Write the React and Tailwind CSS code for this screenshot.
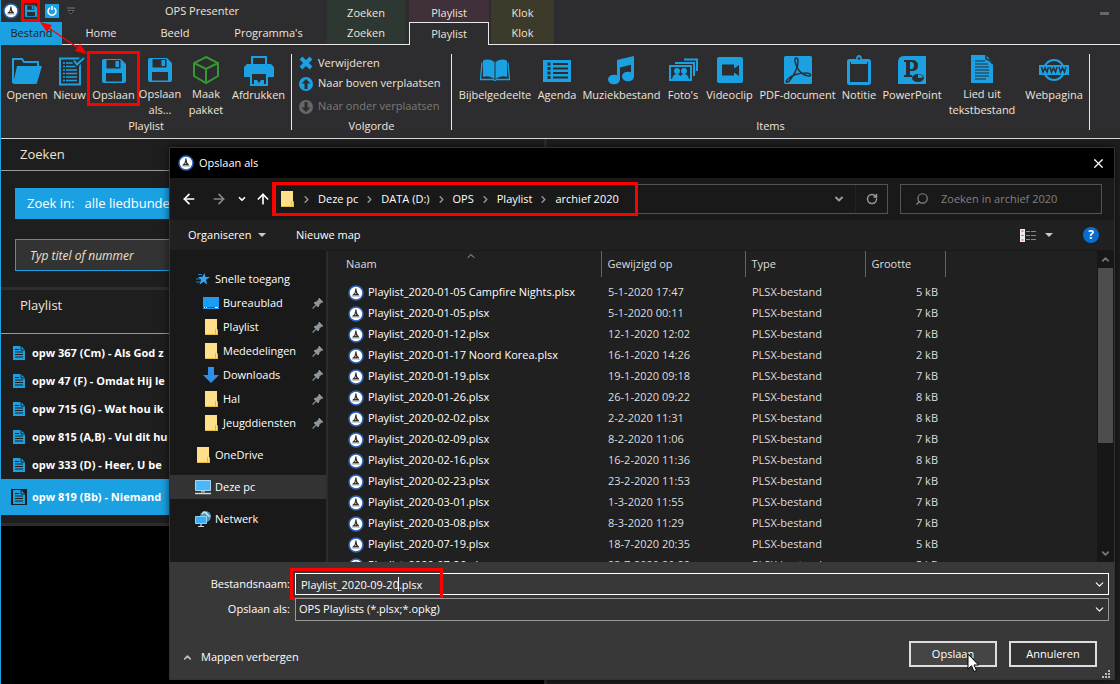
import {
  ArrowLeft,
  ArrowRight,
  ArrowUp,
  ChevronDown,
  ChevronRight,
  ChevronUp,
  RotateCw,
  Search,
  X,
} from "lucide-react";

const BLUE = "#1ba1e2";

/* ---------- icons ---------- */

const Logo = () => (
  <svg className="h-4 w-4 shrink-0" viewBox="0 0 16 16">
    <circle cx="8" cy="8" r="7" fill="#fff" stroke="#2a62b8" strokeWidth="1.5" />
    <path d="M7.500 3.200h.8l1 4.600 1.700 1.700v1H4.500v-.8l2-1.700z" fill="#333" />
    <path d="M7.800 7.500l.4 1.500H7z" fill="#fff" />
    <path d="M4 11.200h8" stroke="#aaa" strokeWidth="0.8" />
  </svg>
);

const SaveIcon = ({ className = "h-7 w-7" }) => (
  <svg className={className} viewBox="0 0 28 28">
    <path
      fillRule="evenodd"
      fill={BLUE}
      d="M4 2h17l5 5v17q0 2-2 2H4q-2 0-2-2V4q0-2 2-2zM6.500 3v8.500h14V3zM6 16v8.500h16V16z"
    />
    <path d="M15.500 4h3.500v6h-3.500z" fill={BLUE} />
  </svg>
);

const OpenIcon = () => (
  <svg className="h-8 w-8" viewBox="0 0 32 32">
    <path d="M2 28V4h9l2 3h14v4" fill="none" stroke={BLUE} strokeWidth="2" />
    <path d="M6 11h25l-5 17q0 1-2 1H2z" fill={BLUE} />
  </svg>
);

const NewIcon = () => (
  <svg className="h-8 w-8" viewBox="0 0 32 32">
    <path d="M6 3.500h20v26H6z" fill="none" stroke={BLUE} strokeWidth="2" />
    <path d="M9 8h2m1 0h8M9 11.500h2m1 0h11M9 15h2m1 0h11M9 18.500h2m1 0h11M9 22h2m1 0h11M9 25.500h2m1 0h11" stroke={BLUE} strokeWidth="1.300" />
    <path d="M20 6l3 3.500L30 2" fill="none" stroke="#2d2d30" strokeWidth="5" />
    <path d="M20 5.500l3 4L30 3" fill="none" stroke={BLUE} strokeWidth="2" />
  </svg>
);

const BoxIcon = () => (
  <svg className="h-8 w-8" viewBox="0 0 32 32">
    <path d="M16 3l12 6v13l-12 7-12-7V9zM4 9l12 6 12-6M16 15v14" fill="none" stroke="#339933" strokeWidth="2" />
  </svg>
);

const PrintIcon = () => (
  <svg className="h-8 w-8" viewBox="0 0 32 32">
    <path d="M9 11V2h14v9" fill="none" stroke={BLUE} strokeWidth="2" />
    <path d="M4 9h24l3 3v10h-6v-3H7v3H1V12z" fill={BLUE} />
    <path d="M8 19v11h16V19" fill="none" stroke={BLUE} strokeWidth="2" />
    <path d="M11 25h3l2 3 2-3h3v4H11z" fill={BLUE} />
  </svg>
);

const BookIcon = () => (
  <svg className="h-8 w-8" viewBox="0 0 32 32">
    <path d="M15.500 7Q10 3 4 5.500V22q6-2 11.500 2zM16.500 7q5.500-4 11.500-1.500V22q-6-2-11.500 2z" fill={BLUE} />
    <path d="M3 7.500L1.500 24.500H14l2 1 2-1h12.500L29 7.500" fill="none" stroke={BLUE} strokeWidth="1.300" />
  </svg>
);

const AgendaIcon = () => (
  <svg className="h-8 w-8" viewBox="0 0 32 32">
    <path d="M2 5h28v22H2z" fill={BLUE} />
    <path d="M12 9h15M12 13.500h15M12 18h15M12 22.500h15" stroke="#2d2d30" strokeWidth="1.800" />
    <path d="M6.500 9h3M6.500 13.500h3M6.500 18h3M6.500 22.500h3" stroke="#2d2d30" strokeWidth="3" />
  </svg>
);

const MusicIcon = () => (
  <svg className="h-8 w-8" viewBox="0 0 32 32">
    <path d="M11 5l17-4v8l-14 3.500V24h-3z" fill={BLUE} />
    <path d="M25 4h3v18h-3z" fill={BLUE} />
    <ellipse cx="8" cy="24.500" rx="6" ry="4.800" fill={BLUE} />
    <ellipse cx="22" cy="21.500" rx="6" ry="4.800" fill={BLUE} />
  </svg>
);

const PhotosIcon = () => (
  <svg className="h-8 w-8" viewBox="0 0 32 32">
    <path d="M3 11h21v14H3zM8 8h19v13M17 4.500h13V16" fill="none" stroke={BLUE} strokeWidth="2" />
    <circle cx="10" cy="16" r="3" fill={BLUE} />
    <circle cx="17" cy="16" r="3" fill={BLUE} />
    <path d="M5 24q1-5 5-5 2 0 3.500 2Q15 19 17 19q4 0 5 5z" fill={BLUE} />
  </svg>
);

const VideoIcon = () => (
  <svg className="h-8 w-8" viewBox="0 0 32 32">
    <rect x="3" y="2" width="26" height="26" rx="2" fill={BLUE} />
    <path d="M8 9.500h12v4l5-3.500v11l-5-3.500v3H8z" fill="#2d2d30" />
  </svg>
);

const PdfIcon = () => (
  <svg className="h-8 w-8" viewBox="0 0 32 32">
    <rect x="2" y="1" width="28" height="28" rx="1.500" fill={BLUE} />
    <path
      d="M14 3c-2 0-1 5 1 9 2 5 7 9 12 9 3 0 2-3-3-3-7 0-14 2-18 6-4 3-1 5 2 1 4-5 8-13 8-19 0-2-1-3-2-3z"
      fill="none"
      stroke="#2d2d30"
      strokeWidth="1.500"
    />
  </svg>
);

const NoteIcon = () => (
  <svg className="h-8 w-8" viewBox="0 0 32 32">
    <rect x="5.500" y="5.500" width="21" height="23" rx="1" fill="none" stroke={BLUE} strokeWidth="3" />
    <path d="M8 5h5q0-5 3-5t3 5h5v4H8z" fill={BLUE} />
    <path d="M7.500 7v2.500h17V7" fill="none" stroke="#2d2d30" strokeWidth="1" />
    <circle cx="16" cy="3.500" r="1.200" fill="#2d2d30" />
  </svg>
);

const PowerPointIcon = () => (
  <svg className="h-8 w-8" viewBox="0 0 32 32">
    <path d="M2 7q0-6 6-6h22v28H2z" fill={BLUE} />
    <path
      fillRule="evenodd"
      d="M8 5h8q6 0 6 5.500T16 16h-2v4h2v2H8v-2h2V7H8zM14 7v7h1q3 0 3-3.500T15 7z"
      fill="#2d2d30"
    />
    <ellipse cx="22" cy="23" rx="6" ry="4" fill="#2d2d30" />
    <path d="M22 23v-3.500q4 0 5 3z" fill={BLUE} />
  </svg>
);

const DocIcon = () => (
  <svg className="h-8 w-8" viewBox="0 0 32 32">
    <path d="M5 1h15l7 8v20H5z" fill={BLUE} />
    <path d="M9 7h10M9 10h13M9 13h14M9 16h14M9 19h14M9 22h14M9 25h11" stroke="#2d2d30" strokeWidth="1.200" />
    <path d="M20 1v4l3 1 4 4" fill="none" stroke="#2d2d30" strokeWidth="1.500" />
  </svg>
);

const WebIcon = () => (
  <svg className="h-8 w-8" viewBox="0 0 32 32">
    <circle cx="16" cy="15" r="10" fill="none" stroke={BLUE} strokeWidth="2" />
    <path d="M1 10h30v10H1z" fill={BLUE} />
    <path
      d="M3.500 12l1.500 5 2-4 2 4 1.500-5M12 12l1.500 5 2-4 2 4 1.500-5M21 12l1.500 5 2-4 2 4 1.500-5"
      fill="none"
      stroke="#2d2d30"
      strokeWidth="1.500"
    />
  </svg>
);

const SongIcon = () => (
  <svg className="h-4 w-4 shrink-0" viewBox="0 0 16 16">
    <path d="M2 1h8l4 4v10H2z" fill={BLUE} />
    <path d="M4 4.500h4M4 7h8M4 9.500h8M4 12h8M10 1v4h4" fill="none" stroke="#1e1e1e" strokeWidth="1" />
  </svg>
);

const FolderIcon = () => (
  <svg className="h-4 w-4 shrink-0" viewBox="0 0 16 16">
    <path d="M2 0h12v10l1 1v5H2z" fill="#ffe08a" />
    <path d="M12.500 10v6M2 15.500h12M14.500 11v5" stroke="#e8bb3f" strokeWidth="1" />
  </svg>
);

const StarIcon = () => (
  <svg className="h-4 w-4 shrink-0" viewBox="0 0 16 16">
    <path d="M9.500 2l1 4 4.500.2-4 2.600 1.200 4.700-3.700-2.700-4 3 1.500-5L3 6l4.500-.2z" fill="#35a5f5" />
    <path d="M3 3.500h4M1 8h4M1 11h4" stroke="#1f7fd0" strokeWidth="1" />
  </svg>
);

const DesktopIcon = () => (
  <svg className="h-4 w-4 shrink-0" viewBox="0 0 16 16">
    <path d="M0 2h16v12H0z" fill="#1e9bf5" />
    <path d="M0 12.500h16" stroke="#0a62b0" />
    <path d="M1 12.500h1m1 0h1m8 0h3" stroke="#fff" />
  </svg>
);

const DownloadIcon = () => (
  <svg className="h-4 w-4 shrink-0" viewBox="0 0 16 16">
    <path d="M5 0h6v8h5l-8 8-8-8h5z" fill="#2f8fe8" />
  </svg>
);

const PcIcon = () => (
  <svg className="h-4 w-4 shrink-0" viewBox="0 0 16 16">
    <path d="M.5 1.500h15v10H.5z" fill="#4ab8f8" stroke="#a9d8f5" strokeWidth="1" />
    <path d="M6 12h4v1.500H6z" fill="#8ca0ad" />
    <path d="M0 14.500h16" stroke="#cfd8de" strokeWidth="1.500" />
  </svg>
);

const NetworkIcon = () => (
  <svg className="h-4 w-4 shrink-0" viewBox="0 0 16 16">
    <circle cx="10.500" cy="5.500" r="5.500" fill="#5b93b5" />
    <path d="M7 3q3-3 5 0t3 2M8 1l4 1" fill="none" stroke="#cbe6f2" strokeWidth="1.500" />
    <path d="M.5 5.500h11v7H.5z" fill="#3aaef5" stroke="#8fd0f8" strokeWidth="1" />
    <path d="M3 15.500h6M6 13v2" stroke="#cfd8de" strokeWidth="1.200" />
  </svg>
);

const PinIcon = () => (
  <svg className="h-3 w-3 shrink-0" viewBox="0 0 12 12">
    <path d="M7 1l4 4-1 .5-.5-.2L7 7.500 7 9 6 10 4.200 8.200 1 11.500.5 11 3.800 7.800 2 6l1-1h1.500L6.800 2.500z" fill="#8d979e" stroke="#8d979e" strokeWidth="0.700" />
  </svg>
);

const Caret = () => (
  <svg className="h-1 w-2" viewBox="0 0 8 4">
    <path d="M0 0h8L4 4z" fill="#c8c8c8" />
  </svg>
);

/* ---------- data ---------- */

const playlistButtons = [
  { label: "Openen", Icon: OpenIcon, width: "w-[44px]" },
  { label: "Nieuw", Icon: NewIcon, width: "w-[41px]" },
  { label: "Opslaan", Icon: SaveIcon, width: "w-[47px]", marked: true },
  { label: "Opslaan als...", Icon: SaveIcon, width: "w-[46px]" },
  { label: "Maak pakket", Icon: BoxIcon, width: "w-[46px]" },
  { label: "Afdrukken", Icon: PrintIcon, width: "w-[59px]" },
];

const itemButtons = [
  { label: "Bijbelgedeelte", Icon: BookIcon, width: "w-[80px]" },
  { label: "Agenda", Icon: AgendaIcon, width: "w-[44px]" },
  { label: "Muziekbestand", Icon: MusicIcon, width: "w-[85px]" },
  { label: "Foto's", Icon: PhotosIcon, width: "w-[38px]" },
  { label: "Videoclip", Icon: VideoIcon, width: "w-[55px]" },
  { label: "PDF-document", Icon: PdfIcon, width: "w-[81px]" },
  { label: "Notitie", Icon: NoteIcon, width: "w-[42px]" },
  { label: "PowerPoint", Icon: PowerPointIcon, width: "w-[64px]" },
  { label: "Lied uit tekstbestand", Icon: DocIcon, width: "w-[76px]" },
  { label: "Webpagina", Icon: WebIcon, width: "w-[68px]" },
];

const songs = [
  "opw 367 (Cm) - Als God z",
  "opw 47 (F) - Omdat Hij le",
  "opw 715 (G) - Wat hou ik",
  "opw 815 (A,B) - Vul dit hu",
  "opw 333 (D) - Heer, U be",
];

const quickAccess = [
  { label: "Bureaublad", Icon: DesktopIcon },
  { label: "Playlist", Icon: FolderIcon },
  { label: "Mededelingen", Icon: FolderIcon },
  { label: "Downloads", Icon: DownloadIcon },
  { label: "Hal", Icon: FolderIcon },
  { label: "Jeugddiensten", Icon: FolderIcon },
];

const files = [
  { name: "Playlist_2020-01-05 Campfire Nights.plsx", date: "5-1-2020 17:47", size: "5 kB" },
  { name: "Playlist_2020-01-05.plsx", date: "5-1-2020 00:11", size: "7 kB" },
  { name: "Playlist_2020-01-12.plsx", date: "12-1-2020 12:02", size: "7 kB" },
  { name: "Playlist_2020-01-17 Noord Korea.plsx", date: "16-1-2020 14:26", size: "2 kB" },
  { name: "Playlist_2020-01-19.plsx", date: "19-1-2020 09:18", size: "7 kB" },
  { name: "Playlist_2020-01-26.plsx", date: "26-1-2020 09:22", size: "8 kB" },
  { name: "Playlist_2020-02-02.plsx", date: "2-2-2020 11:31", size: "8 kB" },
  { name: "Playlist_2020-02-09.plsx", date: "8-2-2020 11:06", size: "7 kB" },
  { name: "Playlist_2020-02-16.plsx", date: "16-2-2020 11:36", size: "8 kB" },
  { name: "Playlist_2020-02-23.plsx", date: "23-2-2020 11:53", size: "7 kB" },
  { name: "Playlist_2020-03-01.plsx", date: "1-3-2020 11:55", size: "7 kB" },
  { name: "Playlist_2020-03-08.plsx", date: "8-3-2020 11:29", size: "7 kB" },
  { name: "Playlist_2020-07-19.plsx", date: "18-7-2020 20:35", size: "5 kB" },
  { name: "Playlist_2020-07-26.plsx", date: "23-7-2020 20:22", size: "5 kB" },
];

const crumbs = ["Deze pc", "DATA (D:)", "OPS", "Playlist", "archief 2020"];

/* ---------- application window ---------- */

const RibbonButton = ({ label, Icon, width, marked }) => (
  <button className={`relative flex shrink-0 flex-col items-center ${width}`}>
    <span className="flex h-[33px] items-center">
      <Icon />
    </span>
    <span className="flex w-0 justify-center">
      <span className={`text-center leading-4 ${label.includes(" ") ? "w-20 px-1" : "whitespace-nowrap"}`}>
        {label.includes(" ") ? (
          <>
            {label.slice(0, label.lastIndexOf(" "))}
            <br />
            {label.slice(label.lastIndexOf(" ") + 1)}
          </>
        ) : (
          label
        )}
      </span>
    </span>
    {marked && <span className="absolute -inset-x-[3px] -top-[3px] h-[55px] border-3 border-[#ff0000]" />}
  </button>
);

const TitleBar = () => (
  <header className="flex">
    <div className="flex w-[326px] shrink-0 flex-col">
      <div className="flex h-[22px] items-center">
        <span className="flex w-[20px] justify-center">
          <Logo />
        </span>
        <button aria-label="Opslaan" className="flex h-[22px] w-[19px] items-center justify-center border-3 border-[#ff0000]">
          <SaveIcon className="h-[14px] w-[14px] shrink-0" />
        </button>
        <button aria-label="Vernieuwen" className="ml-[5px] flex h-[14px] w-[14px] items-center justify-center bg-[#1ba1e2]">
          <svg className="h-3 w-3" viewBox="0 0 12 12">
            <path d="M4 2.800a4 4 0 1 0 4 0M6 1v4" fill="none" stroke="#fff" strokeWidth="1.500" />
          </svg>
        </button>
        <svg className="ml-2 h-2 w-2" viewBox="0 0 8 8">
          <path d="M0 1h8" stroke="#777" strokeWidth="1" />
          <path d="M1 3.500h6L4 7z" fill="#111" stroke="#777" strokeWidth="0.800" />
        </svg>
        <h1 className="ml-[90px]">OPS Presenter</h1>
      </div>
      <nav className="flex h-[23px]">
        <button className="w-[61px] bg-[#1ba1e2] text-[#1e1e1e]">Bestand</button>
        <div className="flex grow border-b border-[#e8e8e8]">
          <button className="w-[78px]">Home</button>
          <button className="w-[70px]">Beeld</button>
          <button className="w-[117px]">Programma's</button>
        </div>
      </nav>
    </div>
    <div className="flex w-[82px] shrink-0 flex-col border-b border-[#e8e8e8] pr-1">
      <div className="flex h-[22px] items-center justify-center bg-[#2e3833] pt-1">Zoeken</div>
      <button className="h-[22px] bg-[#2e3833] pt-px">Zoeken</button>
    </div>
    <div className="flex w-[80px] shrink-0 flex-col">
      <div className="flex h-[22px] items-center justify-center bg-[#40303a] pt-1">Playlist</div>
      <button className="h-[23px] border border-b-0 border-[#e8e8e8]">Playlist</button>
    </div>
    <div className="flex grow justify-between border-b border-[#e8e8e8] pl-[2px]">
      <div className="flex w-[63px] flex-col bg-[#3c3a2b]">
        <div className="flex h-[22px] items-center justify-center pt-1">Klok</div>
        <button className="h-[22px] pt-px">Klok</button>
      </div>
      <button aria-label="Minimaliseren" className="mt-2 mr-[11px] h-[7px] w-[9px] border-b-3 border-[#6a6864]" />
    </div>
  </header>
);

const Ribbon = () => (
  <section className="flex h-[94px] border-b border-[#d8d8d8] pt-[9px]">
    <div className="flex h-[76px] w-[291px] shrink-0 flex-col border-r border-[#e8e8e8]">
      <div className="flex h-[64px] shrink-0 pl-1">
        {playlistButtons.map((button) => (
          <RibbonButton key={button.label} {...button} />
        ))}
      </div>
      <div className="text-center leading-4">Playlist</div>
    </div>
    <div className="flex h-[76px] w-[160px] shrink-0 flex-col border-r border-[#e8e8e8]">
      <div className="flex h-[64px] shrink-0 flex-col pl-[6px]">
        <button className="flex h-[18px] items-center gap-1">
          <svg className="h-4 w-4" viewBox="0 0 16 16">
            <path d="M3 3l10 10M13 3L3 13" stroke={BLUE} strokeWidth="4" />
          </svg>
          Verwijderen
        </button>
        <button className="flex h-[23px] items-center gap-1 whitespace-nowrap">
          <svg className="h-4 w-4" viewBox="0 0 16 16">
            <circle cx="8" cy="8" r="7" fill={BLUE} />
            <path d="M8 3l4.500 4.500h-3V13h-3V7.500h-3z" fill="#2d2d30" />
          </svg>
          Naar boven verplaatsen
        </button>
        <button className="flex h-[23px] items-center gap-1 whitespace-nowrap text-[#7c7a76]">
          <svg className="h-4 w-4" viewBox="0 0 16 16">
            <circle cx="8" cy="8" r="7" fill="#666" />
            <path d="M8 13l4.500-4.500h-3V3h-3v5.500h-3z" fill="#2d2d30" />
          </svg>
          Naar onder verplaatsen
        </button>
      </div>
      <div className="text-center leading-4">Volgorde</div>
    </div>
    <div className="flex h-[76px] w-[638px] shrink-0 flex-col border-r border-[#e8e8e8]">
      <div className="flex h-[64px] shrink-0 pl-[3px]">
        {itemButtons.map((button) => (
          <RibbonButton key={button.label} {...button} />
        ))}
      </div>
      <div className="text-center leading-4">Items</div>
    </div>
  </section>
);

const Workspace = () => (
  <main className="flex grow bg-[#1e1e1e]">
    <div className="flex w-[543px] shrink-0 flex-col">
      <h2 className="h-8 border-b border-[#999] pl-[19px] text-[13px] leading-[30px]">Zoeken</h2>
      <div className="flex flex-col gap-5 border-b-3 border-[#2d2d2d] px-[14px] pt-[17px] pb-4">
        <button className="h-[31px] bg-[#1ba1e2] pl-3 text-left text-[13px] text-white">
          Zoek in:<span className="ml-[10px]">alle liedbunde</span>
        </button>
        <input
          aria-label="Zoeken"
          placeholder="Typ titel of nummer"
          className="h-8 border border-[#1ba1e2] bg-[#333] pl-[14px] text-xs italic placeholder:text-[#f0e0d0]"
        />
      </div>
      <h2 className="h-[44px] border-b border-[#999] pl-[19px] text-[13px] leading-[30px]">Playlist</h2>
      <ul className="border-b-3 border-[#2d2d2d] pt-[5px] pb-2 font-bold text-white">
        {songs.map((song) => (
          <li key={song} className="flex h-7 items-center gap-[5px] pl-[10px]">
            <SongIcon />
            {song}
          </li>
        ))}
        <li className="flex h-9 items-center gap-[5px] bg-[#1ba1e2] pl-[10px]">
          <span className="bg-[#1e1e1e]">
            <SongIcon />
          </span>
          opw 819 (Bb) - Niemand
        </li>
      </ul>
      <div className="grow bg-black" />
    </div>
    <div className="w-[3px] bg-[#2d2d2d]" />
  </main>
);

/* ---------- save dialog ---------- */

const AddressBar = () => (
  <div className="flex h-[42px] shrink-0 items-center bg-[#191919] pr-3 pl-[11px] text-white">
    <button aria-label="Terug" className="w-4">
      <ArrowLeft size={16} strokeWidth={2.5} />
    </button>
    <button aria-label="Vooruit" className="ml-[14px] w-4 text-[#888]">
      <ArrowRight size={16} strokeWidth={2.5} />
    </button>
    <button aria-label="Recente locaties" className="ml-[10px] w-[10px]">
      <ChevronDown size={10} strokeWidth={4} />
    </button>
    <button aria-label="Omhoog" className="ml-2 w-4">
      <ArrowUp size={16} strokeWidth={2.5} />
    </button>
    <div className="relative ml-1 flex h-[30px] grow items-center border border-[#535353] pl-[3px]">
      <FolderIcon />
      <ol className="flex items-center">
        {crumbs.map((crumb) => (
          <li key={crumb} className="flex items-center whitespace-nowrap">
            <ChevronRight className="mx-[6px] text-[#999]" size={11} strokeWidth={3} />
            <a href="#">{crumb}</a>
          </li>
        ))}
      </ol>
      <button aria-label="Vorige locaties" className="mr-[10px] ml-auto text-[#999]">
        <ChevronDown size={12} strokeWidth={4} />
      </button>
      <button aria-label="Vernieuwen" className="flex h-full w-8 items-center justify-center border-l border-[#222] text-[#999]">
        <RotateCw size={12} strokeWidth={3} />
      </button>
      <span className="absolute -top-[3px] -left-[4px] h-[34px] w-[366px] border-3 border-[#ff0000]" />
    </div>
    <label className="ml-3 flex h-[30px] w-[202px] items-center border border-[#535353] pl-[14px]">
      <Search className="shrink-0 -scale-x-100 text-[#888]" size={14} strokeWidth={2} />
      <input
        aria-label="Zoeken in archief 2020"
        placeholder="Zoeken in archief 2020"
        className="ml-3 w-full min-w-0 placeholder:text-[#808080]"
      />
    </label>
  </div>
);

const Toolbar = () => (
  <div className="flex h-[31px] shrink-0 items-center border-b border-[#191919] bg-[#202020] pr-[15px] pl-[18px] text-white">
    <button className="flex w-[78px] items-center justify-between">
      Organiseren
      <Caret />
    </button>
    <button className="ml-[30px]">Nieuwe map</button>
    <button aria-label="Weergave" className="ml-auto flex items-center gap-[9px]">
      <svg className="h-[13px] w-4" viewBox="0 0 16 13">
        <path d="M0 0h5v13H0z" fill="#eee" />
        <path d="M1.500 2h2M1.500 11h2" stroke="#c33" />
        <path d="M1.500 6.500h2" stroke="#36c" />
        <path d="M6 2.500h4m1 0h5M6 6.500h4m1 0h5M6 10.500h4m1 0h5" stroke="#888" />
      </svg>
      <Caret />
    </button>
    <button aria-label="Help" className="ml-[30px] h-4 w-4 rounded-full bg-[#0a6cd0] text-xs leading-4 font-bold">
      ?
    </button>
  </div>
);

const FolderTree = () => (
  <nav className="w-[156px] shrink-0 bg-[#191919] pt-4 text-white">
    <div className="flex h-6 items-center gap-1 pl-[25px]">
      <StarIcon />
      Snelle toegang
    </div>
    {quickAccess.map(({ label, Icon }) => (
      <div key={label} className="flex h-6 items-center gap-1 pr-[2px] pl-[33px]">
        <Icon />
        <span className="grow whitespace-nowrap">{label}</span>
        <PinIcon />
      </div>
    ))}
    <div className="mt-2 flex h-6 items-center gap-1 pl-[25px]">
      <FolderIcon />
      OneDrive
    </div>
    <div className="my-2 flex h-6 items-center gap-1 bg-[#333] pl-[25px]">
      <PcIcon />
      Deze pc
    </div>
    <div className="flex h-6 items-center gap-1 pl-[25px]">
      <NetworkIcon />
      Netwerk
    </div>
  </nav>
);

const FileList = () => (
  <div className="relative min-w-0 grow overflow-hidden border-l-2 border-[#2b2b2b]">
    <ChevronUp className="absolute -top-px left-[137px] text-[#aaa]" size={12} strokeWidth={2} />
    <table className="w-full table-fixed text-left text-[#dedede]">
      <thead>
        <tr className="h-[26px]">
          <th className="w-[273px] border-r border-[#636363] pl-[18px] font-normal">Naam</th>
          <th className="w-[144px] border-r border-[#636363] pl-[6px] font-normal">Gewijzigd op</th>
          <th className="w-[120px] border-r border-[#636363] pl-[6px] font-normal">Type</th>
          <th className="w-[80px] border-r border-[#636363] pl-[6px] font-normal">Grootte</th>
          <th />
        </tr>
      </thead>
      <tbody className="before:block before:h-[5px]">
        {files.map((file) => (
          <tr key={file.name} className="h-[21px] whitespace-nowrap">
            <td className="pl-[20px] text-white">
              <span className="flex items-center gap-1">
                <Logo />
                {file.name}
              </span>
            </td>
            <td className="pl-[7px]">{file.date}</td>
            <td className="pl-[7px]">PLSX-bestand</td>
            <td className="pr-[7px] text-right">{file.size}</td>
            <td />
          </tr>
        ))}
      </tbody>
    </table>
  </div>
);

const Scrollbar = () => (
  <div className="flex w-[17px] shrink-0 flex-col items-center bg-[#171717] text-[#777]">
    <ChevronUp className="my-[3px] shrink-0" size={11} strokeWidth={4} />
    <div className="h-[175px] w-[15px] bg-[#4d4d4d]" />
    <ChevronDown className="mt-auto mb-[3px] shrink-0" size={11} strokeWidth={4} />
  </div>
);

const DialogFooter = () => (
  <footer className="h-[117px] shrink-0 bg-[#383838] pt-[11px] pr-[5px] text-white">
    <div className="flex h-[22px] items-center">
      <label htmlFor="filename" className="w-[120px] shrink-0 text-right">
        Bestandsnaam:
      </label>
      <div className="relative ml-[5px] flex grow items-center border border-white">
        <input id="filename" defaultValue="Playlist_2020-09-20.plsx" className="h-5 grow pl-[5px]" />
        <ChevronDown className="mr-[2px]" size={13} strokeWidth={2} />
        <span className="absolute top-[3px] left-[102px] h-[14px] w-px bg-white" />
        <span className="absolute -top-[6px] -left-[6px] h-[32px] w-[153px] border-3 border-[#ff0000]" />
      </div>
    </div>
    <div className="mt-[3px] flex h-[23px] items-center">
      <label htmlFor="filetype" className="w-[120px] shrink-0 text-right">
        Opslaan als:
      </label>
      <div className="relative ml-[5px] flex grow items-center">
        <select id="filetype" className="h-[23px] grow appearance-none border border-[#999] bg-[#333] pl-[3px]">
          <option>OPS Playlists (*.plsx;*.opkg)</option>
        </select>
        <ChevronDown className="pointer-events-none absolute right-[3px]" size={13} strokeWidth={2} />
      </div>
    </div>
    <div className="mt-5 flex h-[26px] items-center pr-3 pl-3">
      <button className="mt-[6px] flex items-center gap-2">
        <ChevronUp size={11} strokeWidth={4} className="text-[#bbb]" />
        Mappen verbergen
      </button>
      <button className="relative ml-auto h-[26px] w-[88px] border-2 border-[#ddd] bg-[#454545]">
        Opslaan
        <svg className="absolute top-[10px] left-[56px] h-5 w-3" viewBox="0 0 12 20">
          <path d="M1 1v15l3.500-3.300L7 18.500l2.500-1-2.500-5.500h4.500z" fill="#fff" stroke="#000" strokeWidth="1" />
        </svg>
      </button>
      <button className="ml-3 h-[26px] w-[88px] border-2 border-[#ddd] bg-[#333]">Annuleren</button>
    </div>
    <svg className="mt-[3px] mr-[-2px] ml-auto h-[9px] w-[9px]" viewBox="0 0 9 9">
      <path d="M6 0h2v2H6zM3 3h2v2H3zM6 3h2v2H6zM0 6h2v2H0zM3 6h2v2H3zM6 6h2v2H6z" fill="#bbb" />
    </svg>
  </footer>
);

const SaveDialog = () => (
  <div
    role="dialog"
    aria-label="Opslaan als"
    className="absolute top-[147px] right-[5px] bottom-1 left-[168px] flex flex-col border border-[#333] shadow-[0_0_8px_rgba(0,0,0,0.6)]"
  >
    <div className="flex h-[30px] shrink-0 items-center bg-black pr-2 pl-2 text-white">
      <Logo />
      <span className="ml-[5px]">Opslaan als</span>
      <button aria-label="Sluiten" className="ml-auto">
        <X size={15} strokeWidth={2} />
      </button>
    </div>
    <AddressBar />
    <Toolbar />
    <div className="flex min-h-0 grow bg-[#202020]">
      <FolderTree />
      <div className="w-[2px] bg-[#191919]" />
      <FileList />
      <Scrollbar />
    </div>
    <DialogFooter />
  </div>
);

const App = () => {
  return (
    <div className="relative flex min-h-screen flex-col overflow-hidden border-l border-[#1ba1e2] bg-[#2d2d30] font-['Open_Sans',sans-serif] text-[11px] text-[#f0e4d8]">
      <TitleBar />
      <Ribbon />
      <Workspace />
      <SaveDialog />
      {/* Arrow between the two save buttons */}
      <svg className="pointer-events-none absolute top-[20px] left-[38px] h-[36px] w-[50px]" viewBox="0 0 50 36">
        <path d="M7 6l35 24" stroke="#ff0000" strokeWidth="1.500" />
        <path d="M1 2l12 3-5 7zM48 34l-12-3 5-7z" fill="#ff0000" />
      </svg>
    </div>
  );
};

export default App;
